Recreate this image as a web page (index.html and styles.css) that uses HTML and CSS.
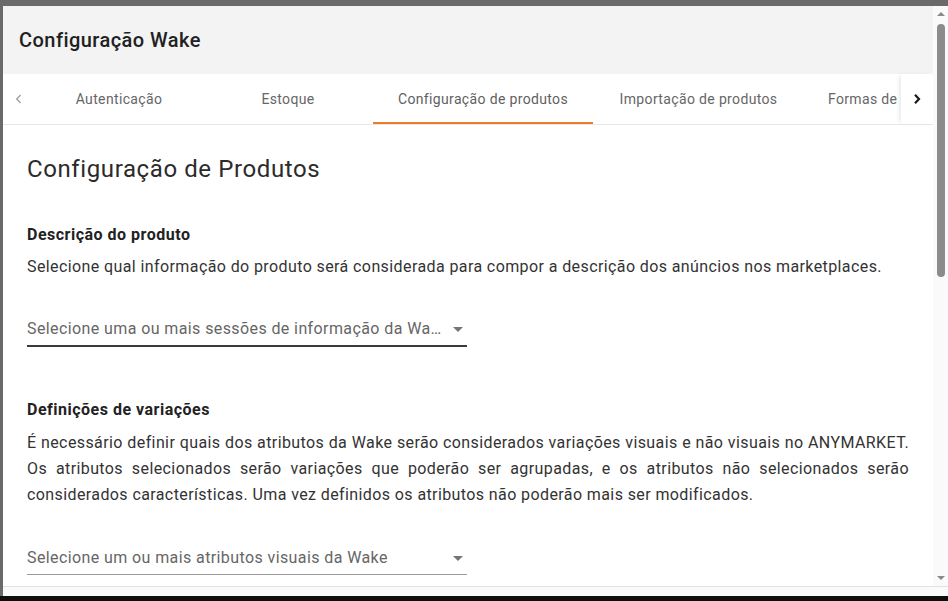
FILE: index.html
```html
<!DOCTYPE html>
<html lang="pt-BR">
<head>
<meta charset="utf-8">
<title>Configuração Wake</title>
<link rel="stylesheet" href="styles.css">
</head>
<body>
<div class="screen">
  <div class="dialog">
    <div class="dialog-top">
      <div class="main">
        <header class="header">Configuração Wake</header>
        <nav class="tabs">
          <div class="pager pager-left">
            <svg width="10" height="12" viewBox="0 0 10 12"><path d="M6.5 2 L2.8 6 L6.5 10" fill="none" stroke="#a0a0a0" stroke-width="1.4"/></svg>
          </div>
          <div class="tab-list">
            <div class="tab tab-auth">Autenticação</div>
            <div class="tab tab-stock">Estoque</div>
            <div class="tab tab-active">Configuração de produtos</div>
            <div class="tab tab-import">Importação de produtos</div>
            <div class="tab">Formas de pagamento</div>
          </div>
          <div class="pager pager-right">
            <svg width="10" height="12" viewBox="0 0 10 12"><path d="M3 1.8 L7 6 L3 10.2" fill="none" stroke="#1a1a1a" stroke-width="2.2"/></svg>
          </div>
        </nav>
        <section class="content">
          <h1 class="title">Configuração de Produtos</h1>
          <h2 class="section-title">Descrição do produto</h2>
          <p class="text">Selecione qual informação do produto será considerada para compor a descrição dos anúncios nos marketplaces.</p>
          <div class="select select-touched">
            <span class="select-value">Selecione uma ou mais sessões de informação da Wake</span>
            <span class="select-arrow"></span>
          </div>
          <h2 class="section-title section-gap">Definições de variações</h2>
          <p class="text text-justify">É necessário definir quais dos atributos da Wake serão considerados variações visuais e não visuais no ANYMARKET. Os atributos selecionados serão variações que poderão ser agrupadas, e os atributos não selecionados serão considerados características. Uma vez definidos os atributos não poderão mais ser modificados.</p>
          <div class="select select-last">
            <span class="select-value">Selecione um ou mais atributos visuais da Wake</span>
            <span class="select-arrow"></span>
          </div>
        </section>
      </div>
      <div class="scrollbar">
        <span class="sb-up"></span>
        <div class="sb-track"><div class="sb-thumb"></div></div>
        <span class="sb-down"></span>
      </div>
    </div>
    <div class="dialog-foot"></div>
  </div>
  <div class="bottom-bar"></div>
</div>
</body>
</html>
```

FILE: styles.css
```css
* { box-sizing: border-box; }
html, body { margin: 0; padding: 0; }
body {
  width: 948px;
  height: 601px;
  overflow: hidden;
  background: #6a6a6a;
  font-family: Roboto, "Liberation Sans", sans-serif;
}
.screen {
  display: grid;
  grid-template-columns: 3px 1fr;
  grid-template-rows: 6px 590px 5px;
  height: 601px;
}
.dialog {
  grid-column: 2;
  grid-row: 2;
  display: flex;
  flex-direction: column;
  background: #fff;
  overflow: hidden;
}
.bottom-bar {
  grid-column: 1 / 3;
  grid-row: 3;
  background: #0e0e0e;
}
.dialog-top {
  display: flex;
  height: 580px;
}
.dialog-foot {
  height: 10px;
  border-top: 1px solid #e2e2e2;
  background: #fafafa;
}
.main {
  width: 930px;
  display: flex;
  flex-direction: column;
  overflow: hidden;
}
.header {
  height: 68px;
  flex-shrink: 0;
  background: #f3f3f3;
  display: flex;
  align-items: center;
  padding-left: 16px;
  font-size: 20px;
  font-weight: 500;
  letter-spacing: 0.45px;
  color: #212121;
}
.tabs {
  height: 51px;
  flex-shrink: 0;
  display: flex;
  border-bottom: 1px solid #e8e8e8;
  background: #fff;
}
.pager {
  width: 32px;
  flex-shrink: 0;
  display: flex;
  align-items: center;
  justify-content: center;
  background: #fff;
}
.pager-right {
  position: relative;
  z-index: 1;
  box-shadow: -3px 0 5px -2px rgba(0,0,0,0.12);
}
.tab-list {
  flex: 1;
  display: flex;
  overflow: hidden;
}
.tab {
  flex-shrink: 0;
  min-width: 168px;
  padding: 0 24px;
  display: flex;
  align-items: center;
  justify-content: center;
  font-size: 14px;
  color: #666;
  white-space: nowrap;
  letter-spacing: 0.35px;
}
.tab-stock { min-width: 170px; }
.tab-active {
  min-width: 220px;
  color: #5f5f5f;
  box-shadow: inset 0 -2px 0 #ec7a26;
}
.tab-import { min-width: 211px; }
.content {
  flex: 1;
  overflow: hidden;
  padding: 28px 24px 0 24px;
  color: #333;
}
.title {
  margin: 0;
  font-size: 24px;
  line-height: 32px;
  font-weight: 400;
  letter-spacing: 0.6px;
  color: #2b2b2b;
}
.section-title {
  margin: 38px 0 0;
  font-size: 16px;
  line-height: 24px;
  font-weight: 700;
  letter-spacing: 0.5px;
  color: #222;
}
.section-gap { margin-top: 51px; }
.text {
  margin: 7px 0 0;
  font-size: 16px;
  line-height: 26px;
  letter-spacing: 0.4px;
  color: #333;
}
.text-justify { text-align: justify; margin-top: 8px; }
.select {
  width: 440px;
  margin-top: 37px;
  height: 29px;
  display: flex;
  align-items: flex-start;
  border-bottom: 1px solid #9a9a9a;
}
.select-touched {
  border-bottom: 2px solid #3a3a3a;
  height: 30px;
  margin-top: 37px;
}
.select-last { margin-top: 38px; }
.select-value {
  flex: 1;
  min-width: 0;
  font-size: 16px;
  line-height: 24px;
  letter-spacing: 0.4px;
  color: #666;
  white-space: nowrap;
  overflow: hidden;
  text-overflow: ellipsis;
}
.select-arrow {
  flex-shrink: 0;
  width: 0;
  height: 0;
  margin: 10px 4px 0 10px;
  border-left: 5px solid transparent;
  border-right: 5px solid transparent;
  border-top: 5px solid #757575;
}
.scrollbar {
  width: 15px;
  display: flex;
  flex-direction: column;
  align-items: center;
  background: #fafafa;
  padding: 5px 0 4px;
}
.sb-up, .sb-down {
  width: 0;
  height: 0;
  border-left: 4px solid transparent;
  border-right: 4px solid transparent;
}
.sb-up { border-bottom: 4px solid #8a8a8a; margin-top: 1px; }
.sb-down { border-top: 4px solid #8a8a8a; margin-bottom: 2px; }
.sb-track {
  flex: 1;
  width: 8px;
  padding-top: 8px;
}
.sb-thumb {
  width: 8px;
  height: 253px;
  border-radius: 4px;
  background: #8c8c8c;
}
```
